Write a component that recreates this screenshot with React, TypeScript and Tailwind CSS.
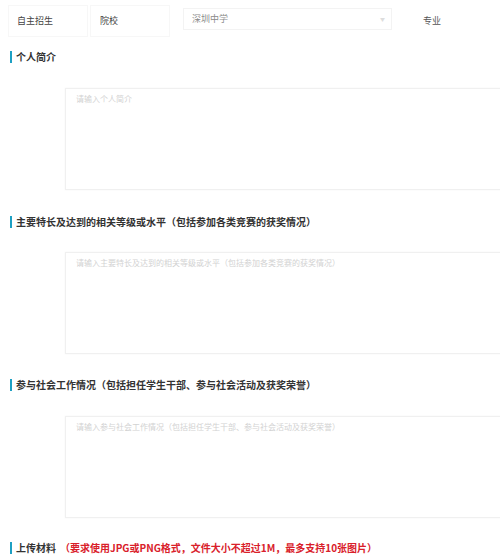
const font = { fontFamily: '"Microsoft YaHei", "Noto Sans CJK SC", sans-serif' };

function Title({ children }: { children: React.ReactNode }) {
	return (
		<div className="flex h-[14px] items-center pl-[10px]">
			<span className="mr-[4px] h-[12px] w-[2px] bg-[#1ea0c3]" />
			<span className="text-[10px] font-bold leading-[14px] text-[#333333]">{children}</span>
		</div>
	);
}

function Area({ placeholder }: { placeholder: string }) {
	return (
		<div className="ml-[65px] h-[102px] w-[460px] border border-[#f0f0f0] px-[10px] pt-[4px] shadow-[0_0_2px_rgba(0,0,0,0.04)]">
			<div className="text-[8px] leading-[12px] text-[#d2d2d2]">{placeholder}</div>
		</div>
	);
}

export default function App() {
	return (
		<div className="h-[558px] w-[500px] overflow-hidden bg-white" style={font}>
			<div className="flex h-[40px] items-start pt-[5px]">
				<div className="ml-[8px] flex h-[32px] w-[80px] items-center border border-[#f7f7f7] pl-[8px] text-[9px] text-[#444444]">
					自主招生
				</div>
				<div className="ml-[2px] flex h-[32px] w-[80px] items-center border border-[#f7f7f7] pl-[9px] text-[9px] text-[#444444]">
					院校
				</div>
				<div className="ml-[13px] mt-[3px] flex h-[22px] w-[209px] items-center justify-between border border-[#f3f3f3] pl-[8px] pr-[6px] text-[9px] text-[#8a8a8a]">
					<span>深圳中学</span>
					<span className="text-[5px] text-[#dddddd]">▼</span>
				</div>
				<div className="ml-[31px] flex h-[32px] items-center text-[9px] text-[#555555]">专业</div>
			</div>

			<div className="mt-[10px]">
				<Title>个人简介</Title>
			</div>
			<div className="mt-[24px]">
				<Area placeholder="请输入个人简介" />
			</div>

			<div className="mt-[25px]">
				<Title>主要特长及达到的相关等级或水平（包括参加各类竞赛的获奖情况）</Title>
			</div>
			<div className="mt-[23px]">
				<Area placeholder="请输入主要特长及达到的相关等级或水平（包括参加各类竞赛的获奖情况）" />
			</div>

			<div className="mt-[24px]">
				<Title>参与社会工作情况（包括担任学生干部、参与社会活动及获奖荣誉）</Title>
			</div>
			<div className="mt-[24px]">
				<Area placeholder="请输入参与社会工作情况（包括担任学生干部、参与社会活动及获奖荣誉）" />
			</div>

			<div className="mt-[23px]">
				<Title>
					上传材料
					<span className="ml-[4px] text-[#d9202a]">（要求使用JPG或PNG格式，文件大小不超过1M，最多支持10张图片）</span>
				</Title>
			</div>
		</div>
	);
}
